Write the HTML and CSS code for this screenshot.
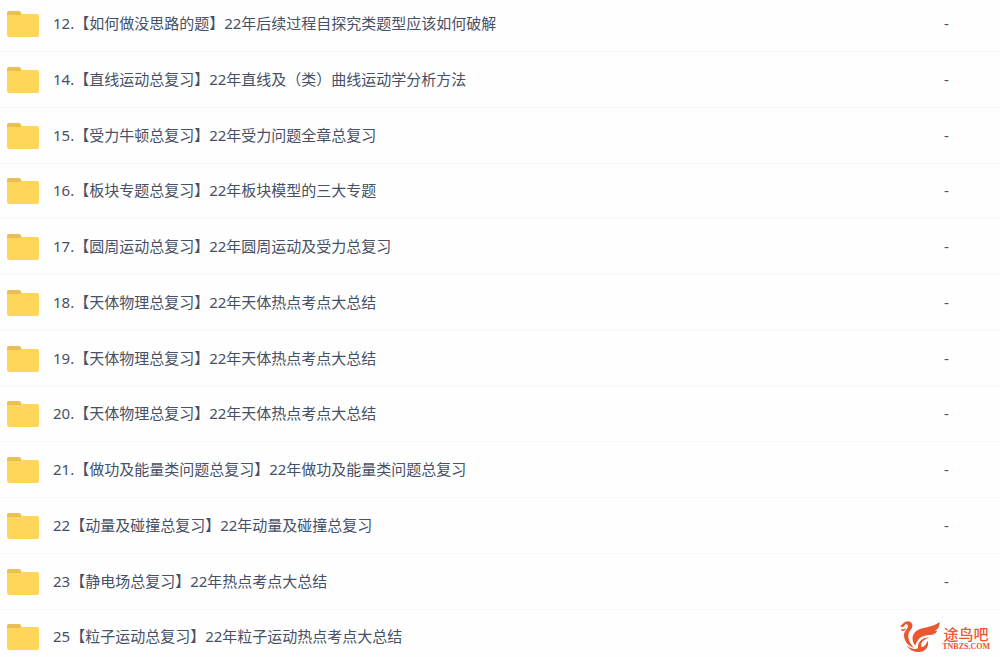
FILE: index.html
```
<!DOCTYPE html>
<html lang="zh-CN">
<head>
    <meta charset="UTF-8">
    <meta name="viewport" content="width=device-width, initial-scale=1.0">
    <title>文件列表</title>
    <link rel="stylesheet" href="styles.css">
</head>
<body>

<!-- Folder icon shared by all rows -->
<svg class="sprite" width="0" height="0" aria-hidden="true">
    <symbol id="folder" viewBox="0 0 32 26">
        <path fill="#e8bf55" d="M0 10V2Q0 0 2 0H12Q14 0 14 2L15 4V10Z"/>
        <path fill="#ffd55a" d="M0 5Q0 4 1 4H14Q15 3 16 3H30Q32 3 32 5V24Q32 26 30 26H2Q0 26 0 24Z"/>
    </symbol>
</svg>

<main>
    <table class="file-list">
        <tbody>
            <tr><td class="icon"><svg class="folder"><use href="#folder"/></svg></td><td class="name">12.【如何做没思路的题】22年后续过程自探究类题型应该如何破解</td><td class="size">-</td></tr>
            <tr><td class="icon"><svg class="folder"><use href="#folder"/></svg></td><td class="name">14.【直线运动总复习】22年直线及（类）曲线运动学分析方法</td><td class="size">-</td></tr>
            <tr><td class="icon"><svg class="folder"><use href="#folder"/></svg></td><td class="name">15.【受力牛顿总复习】22年受力问题全章总复习</td><td class="size">-</td></tr>
            <tr><td class="icon"><svg class="folder"><use href="#folder"/></svg></td><td class="name">16.【板块专题总复习】22年板块模型的三大专题</td><td class="size">-</td></tr>
            <tr><td class="icon"><svg class="folder"><use href="#folder"/></svg></td><td class="name">17.【圆周运动总复习】22年圆周运动及受力总复习</td><td class="size">-</td></tr>
            <tr><td class="icon"><svg class="folder"><use href="#folder"/></svg></td><td class="name">18.【天体物理总复习】22年天体热点考点大总结</td><td class="size">-</td></tr>
            <tr><td class="icon"><svg class="folder"><use href="#folder"/></svg></td><td class="name">19.【天体物理总复习】22年天体热点考点大总结</td><td class="size">-</td></tr>
            <tr><td class="icon"><svg class="folder"><use href="#folder"/></svg></td><td class="name">20.【天体物理总复习】22年天体热点考点大总结</td><td class="size">-</td></tr>
            <tr><td class="icon"><svg class="folder"><use href="#folder"/></svg></td><td class="name">21.【做功及能量类问题总复习】22年做功及能量类问题总复习</td><td class="size">-</td></tr>
            <tr><td class="icon"><svg class="folder"><use href="#folder"/></svg></td><td class="name">22【动量及碰撞总复习】22年动量及碰撞总复习</td><td class="size">-</td></tr>
            <tr><td class="icon"><svg class="folder"><use href="#folder"/></svg></td><td class="name">23【静电场总复习】22年热点考点大总结</td><td class="size">-</td></tr>
            <tr><td class="icon"><svg class="folder"><use href="#folder"/></svg></td><td class="name">25【粒子运动总复习】22年粒子运动热点考点大总结</td><td class="size"></td></tr>
        </tbody>
    </table>
</main>

<div class="watermark">
    <svg class="bird" viewBox="26 28 120 93" aria-hidden="true">
        <!-- head and neck -->
        <path fill="#e8572f" d="M27 42C34 41 37 29 49 29C60 29 66 38 62 48C58 56 51 60 51 71C51 86 58 99 68 108C49 102 39 88 38 72C37 60 49 53 50 44C50 36 41 35 39 43C36 48 29 47 27 42Z"/>
        <path fill="#e8572f" d="M29 51C34 54 39 53 44 49C43 56 36 60 31 57Z"/>
        <!-- body and tail curl -->
        <path fill="#e8572f" d="M46 101C58 112 72 114 80 110C78 94 89 79 114 77C108 82 97 84 92 91C89 96 89 103 91 107C100 104 106 97 108 87C115 99 106 120 83 121C67 122 53 114 46 101Z"/>
        <!-- wing -->
        <path fill="#e8572f" d="M72 102C56 82 64 60 86 52C104 46 127 45 145 31C145 46 139 54 129 58L138 58C132 67 124 70 114 70C94 70 78 80 72 102Z"/>
    </svg>
    <div class="brand">
        <span class="brand-name">途鸟吧</span>
        <span class="brand-url">TNBZS.COM</span>
    </div>
</div>

</body>
</html>
```
FILE: styles.css
```
body {
    font-family: "Noto Sans", "Noto Sans CJK SC", sans-serif;
    font-size: 15px;
    line-height: 20px;
    background: #fefefe;
    color: #465066;
    margin: 0;
    overflow: hidden;
}

main {
    margin-top: -4px;
}

.sprite {
    position: absolute;
}

.file-list {
    width: 100%;
    border-collapse: separate;
    border-spacing: 0;
}

.file-list td {
    box-sizing: border-box;
    height: 56px;
    padding: 0 0 2px;
    border-bottom: 1px solid #f5f6f8;
}

.file-list tr:nth-child(4n) td {
    height: 55px;
}

.file-list .icon {
    width: 53px;
    padding: 0 0 0 7px;
}

.folder {
    display: block;
    width: 32px;
    height: 26px;
}

.file-list .size {
    width: 56px;
}

/* Site mark in the corner, over the list */
.watermark {
    position: absolute;
    right: 10px;
    bottom: 5px;
    display: flex;
    align-items: flex-end;
    gap: 2px;
    color: #e8572f;
}

.bird {
    width: 40px;
    height: 31px;
}

.brand {
    display: flex;
    flex-direction: column;
    align-items: center;
}

.brand-name {
    font-family: "Noto Sans CJK SC", sans-serif;
    font-size: 15px;
    font-weight: 500;
    line-height: 16px;
}

.brand-url {
    font-family: "Liberation Serif", serif;
    font-size: 8px;
    font-weight: bold;
    line-height: 10px;
}
```
